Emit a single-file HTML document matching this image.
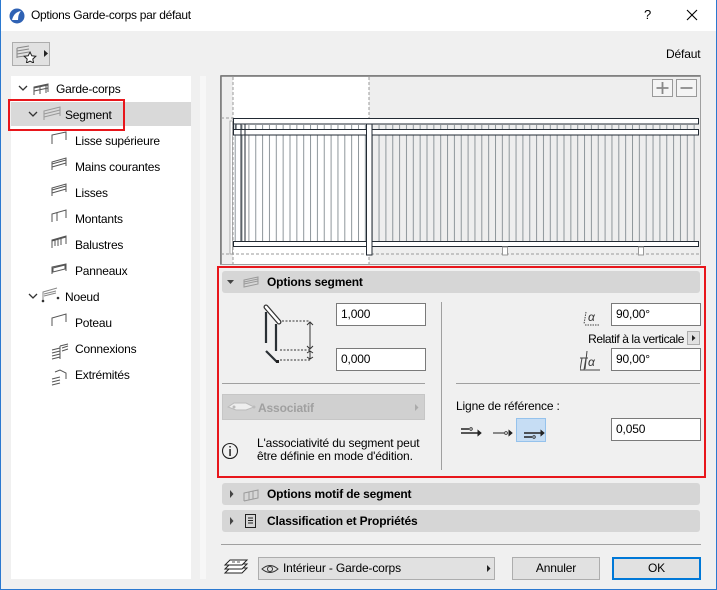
<!DOCTYPE html>
<html><head><meta charset="utf-8"><style>
*{box-sizing:border-box;margin:0;padding:0}
body{width:717px;height:590px;overflow:hidden;background:#f0f0f0;font-family:"Liberation Sans","DejaVu Sans",sans-serif;font-size:12px;color:#000;position:relative;letter-spacing:-0.15px}
.abs{position:absolute}
.win{position:absolute;left:0;top:0;width:717px;height:590px;border:1px solid #2b79d0;border-top:none}
.title{left:1px;top:0;width:715px;height:31px;background:#fff}
.tree{left:11px;top:76px;width:180px;height:503px;background:#fff}
.row{position:absolute;left:0;width:180px;height:24px;line-height:24px;font-size:12px}
.inp{position:absolute;background:#fff;border:1px solid #7a7a7a;height:23px;line-height:21px;padding-left:4px;font-size:12px}
.hdr{position:absolute;left:222px;width:478px;background:#d6d6d6;border-radius:3px;font-weight:bold;font-size:12px}
.btn{position:absolute;background:#e1e1e1;border:1px solid #adadad;height:23px;line-height:21px;text-align:center;font-size:12px}
</style></head><body>
<div class="win"></div>
<div class="abs title"></div>
<svg class="abs" style="left:9px;top:8px" width="16" height="16"><circle cx="8" cy="8" r="7.5" fill="#2f62b4"/><path d="M3 12 Q5 4 12 3 Q9 6 9 12" fill="#fff"/></svg>
<div class="abs" style="left:31px;top:8px;font-size:12px;letter-spacing:-0.3px">Options Garde-corps par défaut</div>
<div class="abs" style="left:644px;top:7px;font-size:13px">?</div>
<svg class="abs" style="left:686px;top:9px" width="12" height="12"><path d="M1 1L11 11M11 1L1 11" stroke="#000" stroke-width="1.1"/></svg>

<div class="abs" style="left:12px;top:42px;width:38px;height:24px;background:#e1e1e1;border:1px solid #adadad"></div>
<svg class="abs" style="left:15px;top:45px" width="34" height="18"><path d="M2 3L14 1M2 6L14 4M2 9L14 7M2 12L10 11M2 3V13" stroke="#888" fill="none"/><path d="M15 7l1.8 3.8 4 .5-3 2.8.8 4-3.6-2-3.6 2 .8-4-3-2.8 4-.5z" fill="#fff" stroke="#222" stroke-width="1"/><path d="M29 5l4 3.5-4 3.5z" fill="#222"/></svg>
<div class="abs" style="left:666px;top:47px;font-size:12px">Défaut</div>

<div class="abs tree">
 <div class="row" style="top:26px;background:#d9d9d9"></div>
</div>
<div class="abs" style="left:8px;top:99px;width:117px;height:32px;border:2px solid #e8161b"></div>
<svg class="abs" style="left:0;top:76px" width="200" height="320" font-family="Liberation Sans" letter-spacing="-0.2">
 <g stroke="#333" fill="none" stroke-width="1.3"><path d="M19 10l4 4 4-4"/><path d="M29 36l4 4 4-4"/><path d="M29 218l4 4 4-4"/></g>
 <g stroke="#555" fill="none" stroke-width="1">
  <path d="M34 19V11L48 8V16M40 18V10M46 17V9M34 12L48 9M34 15L48 12"/>
  <path d="M44 44V35L60 31V40M44 38L60 34M44 41L60 37" stroke="#999"/>
  <path d="M52 68V59L66 56V64" />
  <path d="M52 94V86L66 82V90M52 88L66 84M52 91L66 87"/>
  <path d="M52 120V112L66 108V116M52 114L66 110M52 117L66 113"/>
  <path d="M52 146V138L66 134V142M57 145V137"/>
  <path d="M52 172V164L66 160V168M55 170V163M58 170V162M61 169V162M52 165L66 161"/>
  <path d="M52 198V191L66 188V195M53 192L65 189V193L53 196Z"/>
  <path d="M43 224V216L57 212M44 218L56 215M44 220L56 217" stroke="#888"/>
  <path d="M52 250V242L66 238V246"/>
  <path d="M52 274L60 272M52 277L60 275M52 280L60 278M52 283L60 281M60 270V283M60 270L68 268M62 272L68 270M62 275L68 273"/>
  <path d="M52 303L60 301M52 306L60 304M52 309L60 307M55 296L60 294L66 297V303"/>
 </g>
 <circle cx="43" cy="225" r="1.3" fill="#333"/><circle cx="58" cy="222" r="1.3" fill="#333"/>
 <g font-size="12" fill="#000">
  <text x="56" y="17">Garde-corps</text>
  <text x="65" y="43">Segment</text>
  <text x="75" y="69">Lisse supérieure</text>
  <text x="75" y="95">Mains courantes</text>
  <text x="75" y="121">Lisses</text>
  <text x="75" y="147">Montants</text>
  <text x="75" y="173">Balustres</text>
  <text x="75" y="199">Panneaux</text>
  <text x="65" y="225">Noeud</text>
  <text x="75" y="251">Poteau</text>
  <text x="75" y="277">Connexions</text>
  <text x="75" y="303">Extrémités</text>
 </g>
</svg>

<div class="abs" style="left:200px;top:76px;width:6px;height:503px;background:#f7f7f7"></div>

<svg class="abs" style="left:220px;top:75px" width="482" height="191">
 <defs><pattern id="bal" x="1" y="0" width="6.85" height="10" patternUnits="userSpaceOnUse"><rect x="0" y="0" width="1" height="10" fill="#8e969b"/></pattern></defs>
 <rect x="0.5" y="0.5" width="480" height="189" fill="#eeeeee" stroke="#a0a0a0"/>
 <path d="M1 1V189M1 1H480" stroke="#777" stroke-width="1.5"/>
 <rect x="13" y="2" width="136" height="187" fill="#fff"/>
 <path d="M13 2V189M149 2V189M1 43H13M1 179H480" stroke="#999" stroke-dasharray="3,2"/>
 <rect x="13" y="50" width="466" height="116" fill="url(#bal)"/>
 <rect x="10" y="46" width="2.5" height="133" fill="#fff" stroke="#999" stroke-width=".8"/>
 <rect x="13.5" y="43.5" width="465" height="5.5" fill="#fff" stroke="#222a33"/>
 <rect x="13.5" y="54.5" width="465" height="5.5" fill="#fff" stroke="#222a33"/>
 <path d="M13.5 49V55M16 49V55M21 49V171M25 49V171" stroke="#222a33"/>
 <rect x="13.5" y="166.5" width="465" height="5" fill="#fff" stroke="#222a33"/>
 <rect x="146.5" y="49" width="5.5" height="131" fill="#fff" stroke="#222a33"/>
 <rect x="282.5" y="172" width="5" height="8" fill="#fff" stroke="#999"/>
 <rect x="418.5" y="172" width="5" height="8" fill="#fff" stroke="#999"/>
 <g stroke="#999" fill="#f4f4f4"><rect x="432.5" y="4.5" width="20" height="17"/><rect x="456.5" y="4.5" width="20" height="17"/></g>
 <path d="M436.5 13H448.5M442.5 7V19M460.5 13H472.5" stroke="#888" stroke-width="1.8"/>
</svg>

<div class="abs" style="left:217px;top:266px;width:489px;height:212px;border:2px solid #e8161b"></div>
<div class="hdr" style="top:271px;height:22px;line-height:22px"><span style="position:absolute;left:45px">Options segment</span></div>
<svg class="abs" style="left:222px;top:271px" width="40" height="22"><path d="M5 9l3.5 4 3.5-4z" fill="#444"/><path d="M22 16V9L36 6V13ZM22 11L36 8M22 13L36 10" stroke="#999" fill="none"/></svg>

<svg class="abs" style="left:255px;top:300px" width="70" height="75">
 <path d="M11 7L24 22" stroke="#333" stroke-width="5" stroke-linecap="round"/><path d="M11 7L24 22" stroke="#fff" stroke-width="2.5" stroke-linecap="round"/>
 <path d="M11 12V43M21 24V51M11 51L22 62" stroke="#2a3035" stroke-width="2.2"/>
 <rect x="21" y="60" width="3" height="3" fill="#222"/>
 <path d="M27 21H55M25 50H55M25 60H55" stroke="#333" stroke-dasharray="2,1.5"/>
 <path d="M55 22V48M55 51V59M52 25l3-3 3 3M52 46l3 3 3-3M52 53l3-2 3 2M52 57l3 2 3-2" stroke="#333" fill="none"/>
</svg>
<div class="inp" style="left:336px;top:303px;width:90px">1,000</div>
<div class="inp" style="left:336px;top:348px;width:90px">0,000</div>
<div class="abs" style="left:441px;top:302px;width:1px;height:168px;background:#a0a0a0"></div>
<div class="abs" style="left:222px;top:383px;width:203px;height:1px;background:#a0a0a0"></div>
<div class="abs" style="left:456px;top:383px;width:244px;height:1px;background:#a0a0a0"></div>

<div class="abs" style="left:222px;top:394px;width:203px;height:26px;background:#d0d0d0;border:1px solid #c6c6c6"></div>
<svg class="abs" style="left:226px;top:398px" width="200" height="18"><path d="M2 9L8 5H20L28 9L20 12H10Z" fill="#eee" stroke="#bbb"/><circle cx="8" cy="9" r="1.5" fill="#bbb"/><circle cx="28" cy="9" r="1.5" fill="#bbb"/><path d="M189 6l3.5 3.5-3.5 3.5z" fill="#aaa"/></svg>
<div class="abs" style="left:258px;top:401px;color:#a0a0a0;font-weight:bold;font-size:12px">Associatif</div>
<svg class="abs" style="left:221px;top:442px" width="18" height="18"><circle cx="9" cy="9" r="7.5" fill="none" stroke="#222" stroke-width="1.1"/><rect x="8.3" y="4" width="1.5" height="1.5" fill="#222"/><rect x="8.3" y="7" width="1.5" height="7" fill="#222"/></svg>
<div class="abs" style="left:257px;top:437px;line-height:13px;font-size:12px">L'associativité du segment peut<br>être définie en mode d'édition.</div>

<svg class="abs" style="left:580px;top:303px" width="30" height="70" font-family="Liberation Sans" font-size="12">
 <text x="8" y="18" fill="#333" font-style="italic">α</text><path d="M5 22H20M6 9L4 21" stroke="#444" stroke-dasharray="1.5,1" fill="none"/>
 <text x="8" y="63" fill="#333" font-style="italic">α</text><path d="M0 55H8M2 55L0 67M6 55L4 67M0 67H20M7 48L5 66" stroke="#444" fill="none"/>
</svg>
<div class="inp" style="left:611px;top:303px;width:90px">90,00°</div>
<div class="abs" style="left:560px;width:124px;text-align:right;top:332px;font-size:12px;letter-spacing:-0.4px">Relatif à la verticale</div>
<div class="abs" style="left:687px;top:331px;width:13px;height:14px;background:#e1e1e1;border:1px solid #adadad"></div>
<svg class="abs" style="left:687px;top:331px" width="13" height="14"><path d="M5 4l3.5 3-3.5 3z" fill="#222"/></svg>
<div class="inp" style="left:611px;top:348px;width:90px">90,00°</div>

<div class="abs" style="left:456px;top:399px;font-size:12px">Ligne de référence :</div>
<div class="abs" style="left:516px;top:418px;width:30px;height:24px;background:#c6ddf4;border:1px solid #95c2ec"></div>
<svg class="abs" style="left:458px;top:420px" width="90" height="20">
 <g stroke="#222" fill="#222"><path d="M3 13H20M3 9H11" stroke-width="1.5"/><circle cx="13" cy="9" r="1.3" fill="none" stroke-width=".8"/><path d="M20 10.5l3 2.5-3 2.5z"/>
 <path d="M35 13H46" stroke-width="1"/><circle cx="48" cy="13" r="1.4" fill="none" stroke-width=".8"/><path d="M51 10.5l3 2.5-3 2.5z"/>
 <path d="M66 13H83M66 17H74" stroke-width="1.5"/><circle cx="76" cy="17" r="1.3" fill="none" stroke-width=".8"/><path d="M83 10.5l3 2.5-3 2.5z"/></g>
</svg>
<div class="inp" style="left:611px;top:418px;width:90px">0,050</div>

<div class="hdr" style="top:483px;height:22px;line-height:22px"><span style="position:absolute;left:45px">Options motif de segment</span></div>
<svg class="abs" style="left:222px;top:483px" width="40" height="22"><path d="M8 7l3.5 4-3.5 4z" fill="#444"/><path d="M22 18V10L36 7V15L22 18M27 17V9M31 16V8" stroke="#999" fill="none"/></svg>
<div class="hdr" style="top:510px;height:22px;line-height:22px"><span style="position:absolute;left:45px">Classification et Propriétés</span></div>
<svg class="abs" style="left:222px;top:510px" width="40" height="22"><path d="M8 7l3.5 4-3.5 4z" fill="#444"/><rect x="23.5" y="4.5" width="10" height="13" fill="none" stroke="#222"/><path d="M26 8H31M26 10.5H31M26 13H31" stroke="#222"/></svg>
<div class="abs" style="left:221px;top:544px;width:480px;height:1px;background:#a0a0a0"></div>

<svg class="abs" style="left:222px;top:557px" width="28" height="22"><g fill="#fff" stroke="#222"><path d="M3 16L8 11H25L20 16Z"/><path d="M3 12L8 7H25L20 12Z"/><path d="M3 8L8 3H25L20 8Z"/></g><path d="M10 5L13 5M15 5H18" stroke="#555"/></svg>
<div class="btn" style="left:258px;top:557px;width:237px;text-align:left;padding-left:24px">Intérieur - Garde-corps</div>
<svg class="abs" style="left:260px;top:561px" width="240" height="16"><path d="M2 8Q10 1 18 8Q10 15 2 8Z" fill="none" stroke="#333"/><circle cx="10" cy="8" r="2.5" fill="none" stroke="#333"/><path d="M227 4l3.5 3.5-3.5 3.5z" fill="#222"/></svg>
<div class="btn" style="left:512px;top:557px;width:88px">Annuler</div>
<div class="btn" style="left:612px;top:557px;width:89px;border:2px solid #0078d7;line-height:19px">OK</div>
</body></html>
